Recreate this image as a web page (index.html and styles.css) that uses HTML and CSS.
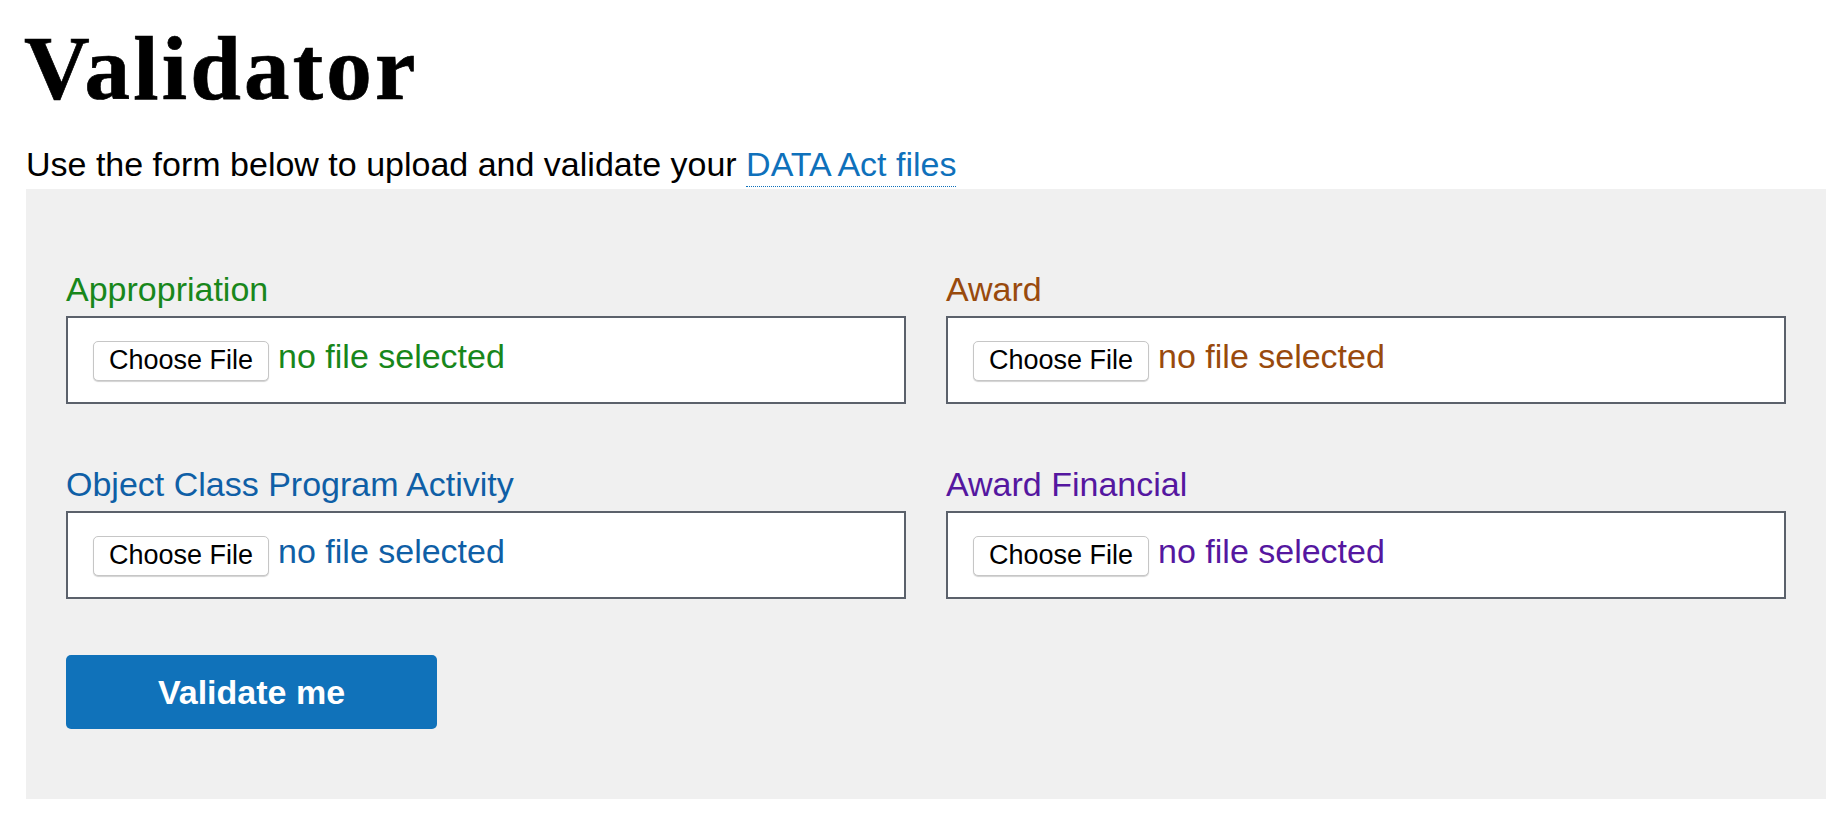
FILE: index.html
```html
<!DOCTYPE html>
<html lang="en">
<head>
<meta charset="utf-8">
<title>Validator</title>
<link rel="stylesheet" href="styles.css">
</head>
<body>
<main class="page">
  <h1 class="title">Validator</h1>
  <p class="intro">Use the form below to upload and validate your <a class="intro-link" href="#">DATA Act files</a></p>
  <form class="panel">
    <div class="fields">
      <div class="field">
        <label class="field-label label-green">Appropriation</label>
        <div class="file-box">
          <span class="choose-btn">Choose File</span>
          <span class="file-status label-green">no file selected</span>
        </div>
      </div>
      <div class="field">
        <label class="field-label label-brown">Award</label>
        <div class="file-box">
          <span class="choose-btn">Choose File</span>
          <span class="file-status label-brown">no file selected</span>
        </div>
      </div>
      <div class="field">
        <label class="field-label label-blue">Object Class Program Activity</label>
        <div class="file-box">
          <span class="choose-btn">Choose File</span>
          <span class="file-status label-blue">no file selected</span>
        </div>
      </div>
      <div class="field">
        <label class="field-label label-purple">Award Financial</label>
        <div class="file-box">
          <span class="choose-btn">Choose File</span>
          <span class="file-status label-purple">no file selected</span>
        </div>
      </div>
    </div>
    <button type="button" class="submit-btn">Validate me</button>
  </form>
</main>
</body>
</html>
```

FILE: styles.css
```css
html, body {
  margin: 0;
  padding: 0;
  background: #ffffff;
}

body {
  font-family: "Liberation Sans", Arial, Helvetica, sans-serif;
  color: #000000;
}

.page {
  padding-left: 26px;
  width: 1800px;
}

.title {
  margin: 23px 0 25px -2px;
  font-family: "Liberation Serif", "Times New Roman", serif;
  font-weight: 700;
  font-size: 91px;
  line-height: 91px;
  letter-spacing: 3.2px;
  -webkit-text-stroke: 0.7px #000000;
  color: #000000;
}

.intro {
  margin: 0;
  font-size: 34px;
  line-height: 50px;
  color: #000000;
}

.intro-link {
  color: #0f71bb;
  text-decoration: none;
  padding-bottom: 3px;
  border-bottom: 1px dotted #0f71bb;
}

.panel {
  background: #f0f0f0;
  padding: 75px 40px 70px 40px;
}

.fields {
  display: grid;
  grid-template-columns: 840px 840px;
  column-gap: 40px;
  row-gap: 55px;
}

.field {
  display: flex;
  flex-direction: column;
}

.field-label {
  display: block;
  font-size: 34px;
  line-height: 50px;
  margin-bottom: 2px;
}

.label-green { color: #18871b; }
.label-brown { color: #994a0d; }
.label-blue { color: #0f5fa6; }
.label-purple { color: #5517a0; }

.file-box {
  box-sizing: border-box;
  height: 88px;
  border: 2px solid #5b616b;
  background: #ffffff;
  padding: 23px 25px 0 25px;
  display: flex;
  align-items: flex-start;
}

.choose-btn {
  box-sizing: border-box;
  height: 40px;
  padding: 0 15px 2px 15px;
  border: 1px solid #c6c6c6;
  border-radius: 5px;
  background: #ffffff;
  box-shadow: 0 1px 1px rgba(0, 0, 0, 0.18);
  font-size: 27px;
  line-height: 36px;
  color: #000000;
  white-space: nowrap;
}

.file-status {
  margin-left: 9px;
  font-size: 34px;
  line-height: 30px;
  white-space: nowrap;
}

.submit-btn {
  display: block;
  margin-top: 56px;
  width: 371px;
  height: 74px;
  padding: 0;
  border: none;
  border-radius: 5px;
  background: #1072ba;
  color: #ffffff;
  font-family: "Liberation Sans", Arial, Helvetica, sans-serif;
  font-weight: 700;
  font-size: 34px;
  line-height: 74px;
  text-align: center;
  cursor: pointer;
}
```
